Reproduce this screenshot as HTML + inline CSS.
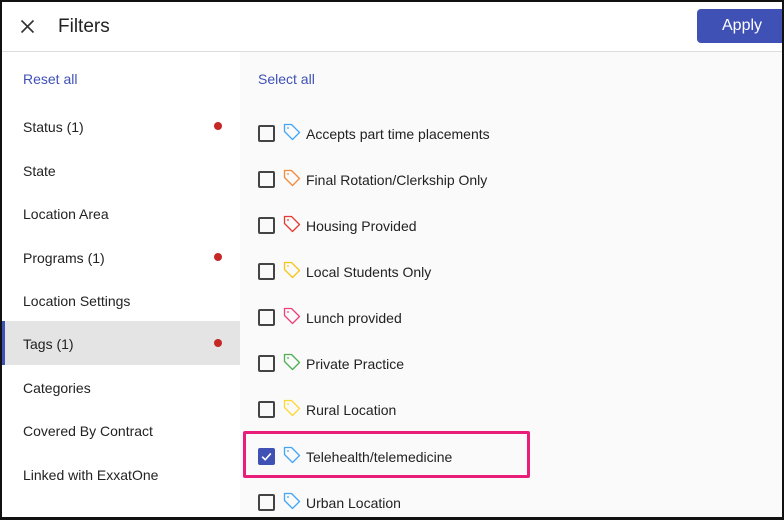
<!DOCTYPE html>
<html><head><style>
*{margin:0;padding:0;box-sizing:border-box}
body{width:784px;height:520px;overflow:hidden;background:#fff;font-family:"Liberation Sans",sans-serif;color:#222;position:relative}
.frame{position:absolute;left:0;top:0;width:784px;height:520px;border:2px solid #111;border-bottom-width:3px;z-index:10;pointer-events:none}
.hdr{position:absolute;left:0;top:0;width:784px;height:52px;border-bottom:1px solid #ddd;background:#fff}
.title{position:absolute;left:58px;top:16px;font-size:19px;color:#222}
.apply{position:absolute;left:697px;top:9px;width:90px;height:34px;background:#3f51b5;border-radius:4px;color:#fff;font-size:16px;line-height:34px;padding-left:25px}
.left{position:absolute;left:0;top:52px;width:240px;height:468px;background:#fff}
.right{position:absolute;left:240px;top:52px;width:544px;height:468px;background:#fafafa}
.link{position:absolute;font-size:14px;color:#3f51b5}
.li{position:absolute;left:23px;font-size:14px;color:#222}
.dot{position:absolute;left:214px;width:8px;height:8px;border-radius:50%;background:#c62828}
.sel{position:absolute;left:2px;top:321px;width:238px;height:44px;background:#e4e4e4;border-left:3px solid #3f51b5}
.row{position:absolute;left:258px;height:20px}
.cb{position:absolute;left:0;top:2px;width:17px;height:17px;border:2px solid #444;border-radius:2px}
.cb.on{background:#3f51b5;border-color:#3f51b5}
.tag{position:absolute;left:25px;top:0}
.txt{position:absolute;left:48px;top:3px;font-size:14px;white-space:nowrap;color:#222}
.box{position:absolute;left:243px;top:431px;width:287px;height:47px;border:3px solid #e91e7a;border-radius:2px}
</style></head><body>
<div class="hdr">
<svg style="position:absolute;left:20px;top:19px" width="15" height="15" viewBox="0 0 15 15"><path d="M1.5 1.5L13.5 13.5M13.5 1.5L1.5 13.5" stroke="#333" stroke-width="1.6"/></svg>
<div class="title">Filters</div>
<div class="apply">Apply</div>
</div>
<div class="left">
</div>
<div class="right"></div>
<div class="sel"></div>
<div class="link" style="left:23px;top:71px">Reset all</div>
<div class="link" style="left:258px;top:71px">Select all</div>
<div class="li" style="top:119px">Status (1)</div><div class="dot" style="top:122px"></div>
<div class="li" style="top:163px">State</div>
<div class="li" style="top:206px">Location Area</div>
<div class="li" style="top:250px">Programs (1)</div><div class="dot" style="top:253px"></div>
<div class="li" style="top:293px">Location Settings</div>
<div class="li" style="top:336px">Tags (1)</div><div class="dot" style="top:339px"></div>
<div class="li" style="top:380px">Categories</div>
<div class="li" style="top:423px">Covered By Contract</div>
<div class="li" style="top:467px">Linked with ExxatOne</div>

<div class="row" style="top:123px"><div class="cb"></div><svg class="tag" width="18" height="18" viewBox="0 0 18 18"><path d="M1.5 1.5H8.5L16.5 9.5L9.5 16.5L1.5 8.5Z" fill="none" stroke="#42a5f5" stroke-width="1.3" stroke-linejoin="round"/><circle cx="5" cy="5" r="0.9" fill="#42a5f5"/></svg><div class="txt">Accepts part time placements</div></div>
<div class="row" style="top:169px"><div class="cb"></div><svg class="tag" width="18" height="18" viewBox="0 0 18 18"><path d="M1.5 1.5H8.5L16.5 9.5L9.5 16.5L1.5 8.5Z" fill="none" stroke="#f08a3c" stroke-width="1.3" stroke-linejoin="round"/><circle cx="5" cy="5" r="0.9" fill="#f08a3c"/></svg><div class="txt">Final Rotation/Clerkship Only</div></div>
<div class="row" style="top:215px"><div class="cb"></div><svg class="tag" width="18" height="18" viewBox="0 0 18 18"><path d="M1.5 1.5H8.5L16.5 9.5L9.5 16.5L1.5 8.5Z" fill="none" stroke="#e53935" stroke-width="1.3" stroke-linejoin="round"/><circle cx="5" cy="5" r="0.9" fill="#e53935"/></svg><div class="txt">Housing Provided</div></div>
<div class="row" style="top:261px"><div class="cb"></div><svg class="tag" width="18" height="18" viewBox="0 0 18 18"><path d="M1.5 1.5H8.5L16.5 9.5L9.5 16.5L1.5 8.5Z" fill="none" stroke="#f5c518" stroke-width="1.3" stroke-linejoin="round"/><circle cx="5" cy="5" r="0.9" fill="#f5c518"/></svg><div class="txt">Local Students Only</div></div>
<div class="row" style="top:307px"><div class="cb"></div><svg class="tag" width="18" height="18" viewBox="0 0 18 18"><path d="M1.5 1.5H8.5L16.5 9.5L9.5 16.5L1.5 8.5Z" fill="none" stroke="#ec407a" stroke-width="1.3" stroke-linejoin="round"/><circle cx="5" cy="5" r="0.9" fill="#ec407a"/></svg><div class="txt">Lunch provided</div></div>
<div class="row" style="top:353px"><div class="cb"></div><svg class="tag" width="18" height="18" viewBox="0 0 18 18"><path d="M1.5 1.5H8.5L16.5 9.5L9.5 16.5L1.5 8.5Z" fill="none" stroke="#4caf50" stroke-width="1.3" stroke-linejoin="round"/><circle cx="5" cy="5" r="0.9" fill="#4caf50"/></svg><div class="txt">Private Practice</div></div>
<div class="row" style="top:399px"><div class="cb"></div><svg class="tag" width="18" height="18" viewBox="0 0 18 18"><path d="M1.5 1.5H8.5L16.5 9.5L9.5 16.5L1.5 8.5Z" fill="none" stroke="#fdd835" stroke-width="1.3" stroke-linejoin="round"/><circle cx="5" cy="5" r="0.9" fill="#fdd835"/></svg><div class="txt">Rural Location</div></div>
<div class="row" style="top:446px"><div class="cb on"><svg width="13" height="13" viewBox="0 0 12 12" style="position:absolute;left:0;top:0"><path d="M2 6.2L4.8 9L10 3.2" fill="none" stroke="#fff" stroke-width="1.5"/></svg></div><svg class="tag" width="18" height="18" viewBox="0 0 18 18"><path d="M1.5 1.5H8.5L16.5 9.5L9.5 16.5L1.5 8.5Z" fill="none" stroke="#42a5f5" stroke-width="1.3" stroke-linejoin="round"/><circle cx="5" cy="5" r="0.9" fill="#42a5f5"/></svg><div class="txt">Telehealth/telemedicine</div></div>
<div class="row" style="top:492px"><div class="cb"></div><svg class="tag" width="18" height="18" viewBox="0 0 18 18"><path d="M1.5 1.5H8.5L16.5 9.5L9.5 16.5L1.5 8.5Z" fill="none" stroke="#42a5f5" stroke-width="1.3" stroke-linejoin="round"/><circle cx="5" cy="5" r="0.9" fill="#42a5f5"/></svg><div class="txt">Urban Location</div></div>
<div class="box"></div>
<div class="frame"></div>
</body></html>
